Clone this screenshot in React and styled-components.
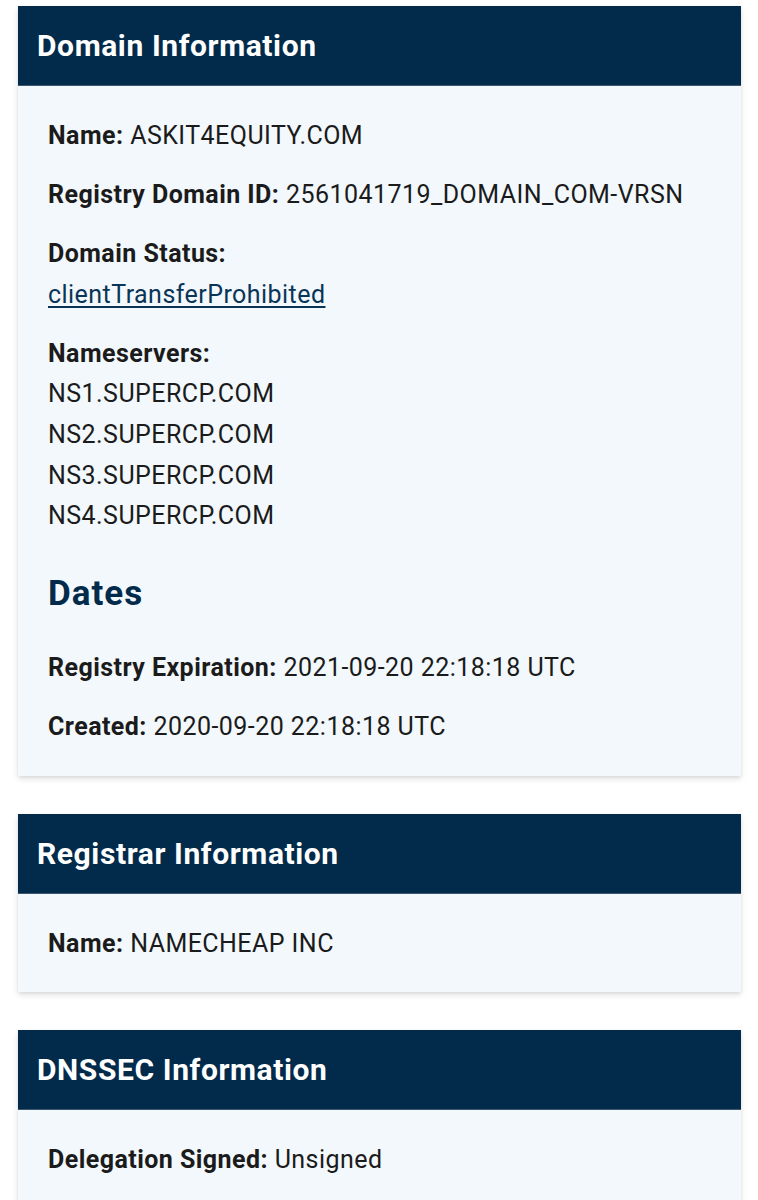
import styled, { createGlobalStyle } from "styled-components";

const COLORS = {
  NAVY: "#022b4b",
  BODY: "#f2f8fc",
  TEXT: "#1b1b1b",
  LINK: "#0b3556",
};

const GlobalStyle = createGlobalStyle`
  body {
    margin: 0;
    background: #ffffff;
    font-family: Roboto, "Liberation Sans", sans-serif;
  }
`;

const data = {
  domain: [
    { label: "Name:", value: "ASKIT4EQUITY.COM" },
    { label: "Registry Domain ID:", value: "2561041719_DOMAIN_COM-VRSN" },
    { label: "Domain Status:", link: "clientTransferProhibited" },
    {
      label: "Nameservers:",
      list: ["NS1.SUPERCP.COM", "NS2.SUPERCP.COM", "NS3.SUPERCP.COM", "NS4.SUPERCP.COM"],
    },
  ],
  dates: [
    { label: "Registry Expiration:", value: "2021-09-20 22:18:18 UTC" },
    { label: "Created:", value: "2020-09-20 22:18:18 UTC" },
  ],
};

function Field({ label, value, link, list }) {
  return (
    <FieldRow>
      <Label>{label}</Label>
      {value && <> {value}</>}
      {link && (
        <Block>
          <StatusLink href="#">{link}</StatusLink>
        </Block>
      )}
      {list && list.map((item) => <Block key={item}>{item}</Block>)}
    </FieldRow>
  );
}

export default function App() {
  return (
    <Page>
      <GlobalStyle />
      <Card>
        <Header>Domain Information</Header>
        <Body>
          {data.domain.map((f) => (
            <Field key={f.label} {...f} />
          ))}
          <SubHeading>Dates</SubHeading>
          {data.dates.map((f) => (
            <Field key={f.label} {...f} />
          ))}
        </Body>
      </Card>
      <Card>
        <Header>Registrar Information</Header>
        <Body>
          <Field label="Name:" value="NAMECHEAP INC" />
        </Body>
      </Card>
      <Card>
        <Header>DNSSEC Information</Header>
        <Body>
          <Field label="Delegation Signed:" value="Unsigned" />
        </Body>
      </Card>
    </Page>
  );
}

const Page = styled.div`
  display: flex;
  flex-direction: column;
  gap: 38px;
  padding: 6px 17px 40px 18px;
`;

const Card = styled.section`
  background: ${COLORS.BODY};
  box-shadow: 0 3px 6px rgba(0, 0, 0, 0.12), 0 1px 3px rgba(0, 0, 0, 0.06);
`;

const Header = styled.h2`
  margin: 0;
  height: 80px;
  display: flex;
  align-items: center;
  padding: 0 19px;
  background: ${COLORS.NAVY};
  color: #ffffff;
  font-size: 30px;
  letter-spacing: 0.6px;
  font-weight: 700;
  border-bottom: 1px solid #3b5870;
  box-sizing: border-box;
`;

const Body = styled.div`
  padding: 30px 30px 28px;
  color: ${COLORS.TEXT};
  font-size: 25px;
  letter-spacing: 0.45px;
  line-height: 40.6px;
`;

const FieldRow = styled.div`
  margin-bottom: 18.5px;
  &:last-child {
    margin-bottom: 0;
  }
`;

const Label = styled.strong`
  font-weight: 700;
`;

const Block = styled.div``;

const StatusLink = styled.a`
  color: ${COLORS.LINK};
  text-decoration: underline;
  text-underline-offset: 3px;
`;

const SubHeading = styled.h3`
  margin: 37px 0 34px;
  color: ${COLORS.NAVY};
  font-size: 35px;
  letter-spacing: 1px;
  font-weight: 700;
  line-height: 40px;
`;
